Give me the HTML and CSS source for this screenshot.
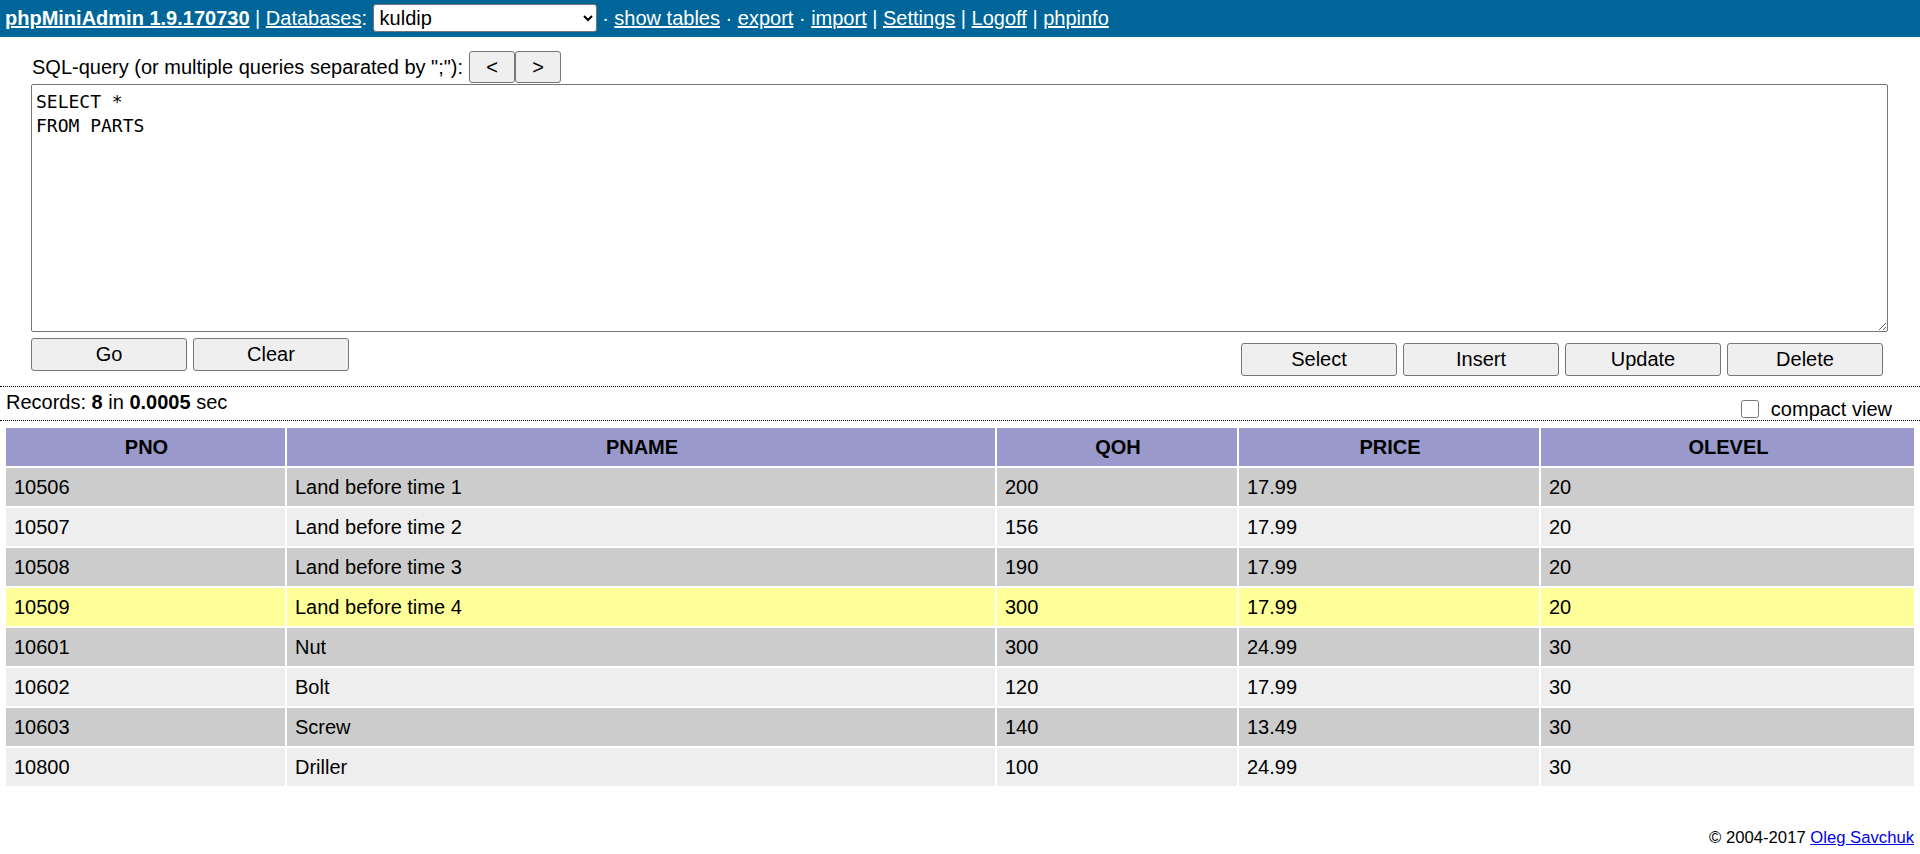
FILE: index.html
```html
<!DOCTYPE html>
<html>
<head>
<meta charset="utf-8">
<title>phpMiniAdmin</title>
<link rel="stylesheet" href="styles.css">
</head>
<body>
<div class="inv"><a href="#"><b>phpMiniAdmin 1.9.170730</b></a> | <a href="#">Databases</a>: <select class="db"><option>kuldip</option></select> · <a href="#">show tables</a> · <a href="#">export</a> · <a href="#">import</a> | <a href="#">Settings</a> | <a href="#">Logoff</a> | <a href="#">phpinfo</a></div>
<form class="query" onsubmit="return false">
  <div class="qlabel">SQL-query (or multiple queries separated by ";"):<span class="qnavs"><button type="button" class="btn qnav">&lt;</button><button type="button" class="btn qnav">&gt;</button></span></div>
  <textarea class="qtext" spellcheck="false">SELECT *
FROM PARTS</textarea>
  <div class="actions">
    <div class="grp"><button type="button" class="btn sbtn">Go</button><button type="button" class="btn sbtn">Clear</button></div>
    <div class="grp right"><button type="button" class="btn sbtn">Select</button><button type="button" class="btn sbtn">Insert</button><button type="button" class="btn sbtn">Update</button><button type="button" class="btn sbtn">Delete</button></div>
  </div>
</form>
<div class="stat">
  <div class="recs">Records: <b>8</b> in <b>0.0005</b> sec</div>
  <label class="compact"><input type="checkbox" class="cb">compact view</label>
</div>
<table class="res">
  <colgroup><col class="c1"><col class="c2"><col class="c3"><col class="c4"><col class="c5"></colgroup>
  <thead>
    <tr class="h"><th>PNO</th><th>PNAME</th><th>QOH</th><th>PRICE</th><th>OLEVEL</th></tr>
  </thead>
  <tbody>
    <tr class="e"><td>10506</td><td>Land before time 1</td><td>200</td><td>17.99</td><td>20</td></tr>
    <tr class="o"><td>10507</td><td>Land before time 2</td><td>156</td><td>17.99</td><td>20</td></tr>
    <tr class="e"><td>10508</td><td>Land before time 3</td><td>190</td><td>17.99</td><td>20</td></tr>
    <tr class="s"><td>10509</td><td>Land before time 4</td><td>300</td><td>17.99</td><td>20</td></tr>
    <tr class="e"><td>10601</td><td>Nut</td><td>300</td><td>24.99</td><td>30</td></tr>
    <tr class="o"><td>10602</td><td>Bolt</td><td>120</td><td>17.99</td><td>30</td></tr>
    <tr class="e"><td>10603</td><td>Screw</td><td>140</td><td>13.49</td><td>30</td></tr>
    <tr class="o"><td>10800</td><td>Driller</td><td>100</td><td>24.99</td><td>30</td></tr>
  </tbody>
</table>
<div class="ft">© 2004-2017 <a href="#">Oleg Savchuk</a></div>
</body>
</html>
```
FILE: styles.css
```css
* { box-sizing: border-box; }
body {
  margin: 0;
  font-family: "Liberation Sans", Arial, sans-serif;
  font-size: 20px;
  color: #000;
  background: #fff;
}
.inv {
  background: #069;
  color: #fff;
  height: 37px;
  line-height: 37px;
  padding: 0 5px;
  white-space: nowrap;
}
.inv a { color: #fff; }
.db {
  width: 224px;
  height: 28px;
  font-family: "Liberation Sans", Arial, sans-serif;
  font-size: 20px;
  vertical-align: middle;
  border: 1px solid #767676;
  border-radius: 3px;
  background: #fff;
  color: #000;
  padding: 0 2px;
  margin-top: -3px;
}
.query {
  margin: 0;
  padding: 14px 32px 10px 31px;
  border-bottom: 1px dotted #000;
}
.qlabel {
  display: flex;
  align-items: center;
  height: 32px;
  padding-left: 1px;
}
.qnavs { display: flex; margin-left: 6px; }
.btn {
  font-family: "Liberation Sans", Arial, sans-serif;
  font-size: 20px;
  color: #000;
  background: #efefef;
  border: 1px solid #767676;
  border-radius: 3px;
  padding: 0;
  margin: 0;
}
.qnav { width: 46px; height: 32px; }
.qtext {
  display: block;
  width: 100%;
  height: 248px;
  margin: 1px 0 0;
  padding: 5px 4px 3px;
  border: 1px solid #767676;
  border-radius: 2px;
  font-family: "DejaVu Sans Mono", "Liberation Mono", monospace;
  font-size: 18px;
  line-height: 24px;
  color: #000;
  resize: both;
}
.actions {
  display: flex;
  justify-content: space-between;
  align-items: flex-start;
  margin-top: 6px;
}
.grp { display: flex; gap: 6px; }
.grp.right { margin-top: 5px; margin-right: 5px; }
.sbtn { width: 156px; height: 33px; }
.stat {
  display: flex;
  justify-content: space-between;
  height: 34px;
  border-bottom: 1px dotted #000;
}
.recs { padding: 4px 0 0 6px; line-height: 22px; }
.compact {
  align-self: flex-end;
  display: flex;
  align-items: center;
  line-height: 22px;
  margin-right: 28px;
}
.cb { width: 18px; height: 18px; margin: 0 12px 0 0; }
.res {
  width: calc(100% - 10px);
  margin: 6px 5px 0;
  border-collapse: separate;
  border-spacing: 0;
  table-layout: fixed;
}
.c1 { width: 281px; }
.c2 { width: 710px; }
.c3 { width: 242px; }
.c4 { width: 302px; }
.c5 { width: 375px; }
.res th, .res td {
  border: 1px solid #fff;
  padding: 8px 6px 8px 8px;
  line-height: 22px;
  text-align: left;
  vertical-align: top;
  white-space: nowrap;
}
.res th { text-align: center; font-weight: bold; }
tr.h { background: #99c; }
tr.e { background: #ccc; }
tr.o { background: #eee; }
tr.s { background: #ff9; }
.ft {
  text-align: right;
  font-size: 16.67px;
  line-height: 18px;
  margin-top: 42px;
  padding-right: 6px;
}
.ft a { color: #00e; }
```
